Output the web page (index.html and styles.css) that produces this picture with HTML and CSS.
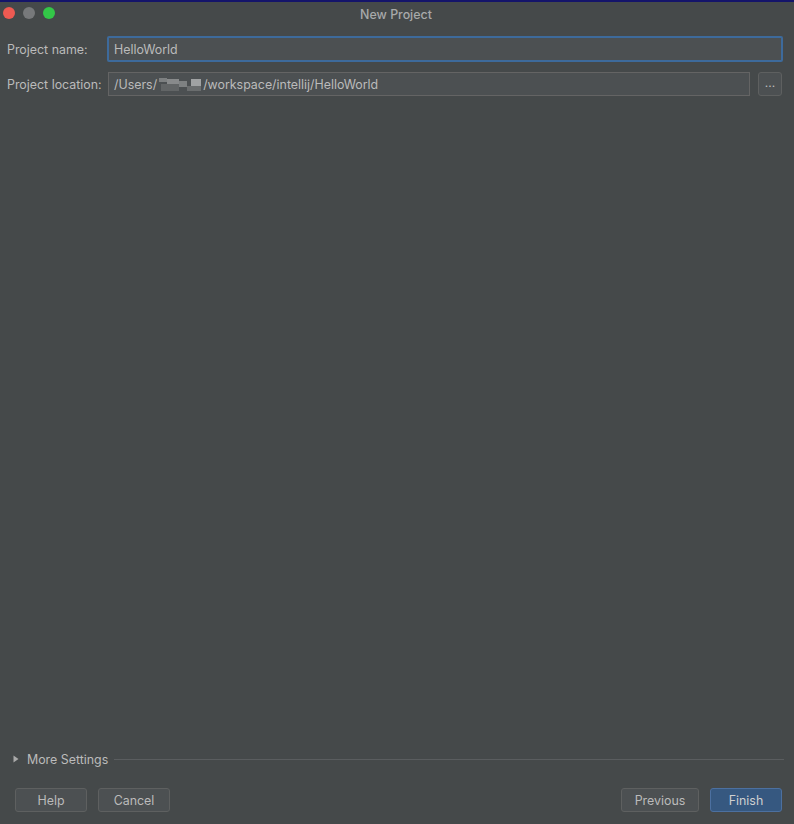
FILE: index.html
```html
<!DOCTYPE html>
<html>
<head>
<meta charset="utf-8">
<link rel="stylesheet" href="styles.css">
</head>
<body>
<div class="window">
  <div class="titlebar">
    <div class="lights">
      <span class="light red"></span>
      <span class="light grey"></span>
      <span class="light green"></span>
    </div>
    <div class="title">New Project</div>
  </div>
  <div class="form">
    <div class="row">
      <label class="label">Project name:</label>
      <div class="field focused">HelloWorld</div>
    </div>
    <div class="row">
      <label class="label">Project location:</label>
      <div class="loc">
        <div class="field plain">/Users/<span class="blur"><span class="b1"></span><span class="b2"></span><span class="b3"></span><span class="b4"></span><span class="b5"></span><span class="b6"></span></span>/workspace/intellij/HelloWorld</div>
        <div class="browse">...</div>
      </div>
    </div>
  </div>
  <div class="spacer"></div>
  <div class="more">
    <svg class="tri" width="6" height="8" viewBox="0 0 6 8"><path d="M0.5 0.5 L5.5 4 L0.5 7.5 Z" fill="#a9a9a9"/></svg>
    <span class="more-text">More Settings</span>
    <span class="rule"></span>
  </div>
  <div class="buttons">
    <div class="left">
      <div class="btn help">Help</div>
      <div class="btn cancel">Cancel</div>
    </div>
    <div class="right">
      <div class="btn previous">Previous</div>
      <div class="btn primary finish">Finish</div>
    </div>
  </div>
</div>
</body>
</html>
```
FILE: styles.css
```css
html, body {
  margin: 0;
  padding: 0;
  background: #45494a;
}
body {
  font-family: "Inter", "Liberation Sans", sans-serif;
  font-size: 12.4px;
  color: #bbbbbb;
}
.window {
  width: 794px;
  height: 824px;
  display: flex;
  flex-direction: column;
  background: #45494a;
  border-top: 2px solid #14146a;
  box-sizing: border-box;
  position: relative;
}
.titlebar {
  height: 24px;
  position: relative;
  display: flex;
  align-items: center;
  justify-content: center;
}
.lights {
  position: absolute;
  left: 3px;
  top: 5px;
  display: flex;
  gap: 8px;
}
.light {
  width: 12px;
  height: 12px;
  border-radius: 50%;
  display: block;
}
.red { background: #ee5a52; }
.grey { background: #77797b; }
.green { background: #33c748; }
.title {
  color: #a8a9aa;
  font-weight: 500;
  font-size: 12.4px;
  margin-right: 2px;
}
.form {
  padding: 10px 11px 0 7px;
  display: flex;
  flex-direction: column;
  gap: 10px;
}
.row {
  display: grid;
  grid-template-columns: 100px 1fr;
  align-items: center;
}
.label {
  color: #bbbbbb;
  white-space: nowrap;
}
.field {
  background: #4c5052;
  box-sizing: border-box;
  display: flex;
  align-items: center;
  color: #bbbbbb;
  white-space: nowrap;
}
.focused {
  height: 26px;
  border: 2px solid #3d6a9b;
  border-radius: 2px;
  padding-left: 5px;
}
.loc {
  display: flex;
  align-items: center;
  gap: 8px;
  margin-left: 1px;
  margin-right: 1px;
}
.plain {
  flex: 1;
  height: 24px;
  border: 1px solid #646464;
  padding-left: 5px;
}
.blur {
  display: inline-flex;
  width: 44px;
  height: 16px;
  position: relative;
  margin: 0 0 0 2px;
}
.blur span {
  position: absolute;
  display: block;
}
.b1 { left: 0; top: 2px; width: 8px; height: 4px; background: #7d8081; }
.b2 { left: 8px; top: 3px; width: 12px; height: 8px; background: #888a8b; }
.b3 { left: 2px; top: 8px; width: 18px; height: 7px; background: #626566; }
.b4 { left: 20px; top: 5px; width: 8px; height: 6px; background: #7e8182; }
.b5 { left: 32px; top: 3px; width: 10px; height: 9px; background: #a0a2a3; }
.b6 { left: 28px; top: 10px; width: 14px; height: 5px; background: #6a6d6e; }
.browse {
  width: 24px;
  height: 24px;
  box-sizing: border-box;
  border: 1px solid #5e6060;
  border-radius: 3px;
  background: #4c5052;
  display: flex;
  align-items: center;
  justify-content: center;
  font-size: 12px;
  color: #bbbbbb;
  line-height: 1;
  padding-bottom: 2px;
}
.spacer { flex: 1; }
.more {
  display: flex;
  align-items: center;
  padding: 0 10px 0 13px;
  height: 18px;
}
.tri { display: block; margin-right: 8px; }
.more-text {
  color: #bbbbbb;
  white-space: nowrap;
  margin-right: 6px;
}
.rule {
  flex: 1;
  height: 1px;
  background: #5a5d5f;
}
.buttons {
  display: flex;
  justify-content: space-between;
  padding: 20px 12px 12px 15px;
}
.left, .right {
  display: flex;
  gap: 11px;
}
.btn {
  height: 24px;
  box-sizing: border-box;
  border: 1px solid #5e6060;
  border-radius: 3px;
  background: #4c5052;
  color: #bbbbbb;
  display: flex;
  align-items: center;
  justify-content: center;
}
.help { width: 72px; }
.cancel { width: 72px; }
.previous { width: 78px; }
.finish { width: 72px; }
.primary {
  background: #365880;
  border-color: #4c70a0;
  color: #d0d0d0;
}
```
